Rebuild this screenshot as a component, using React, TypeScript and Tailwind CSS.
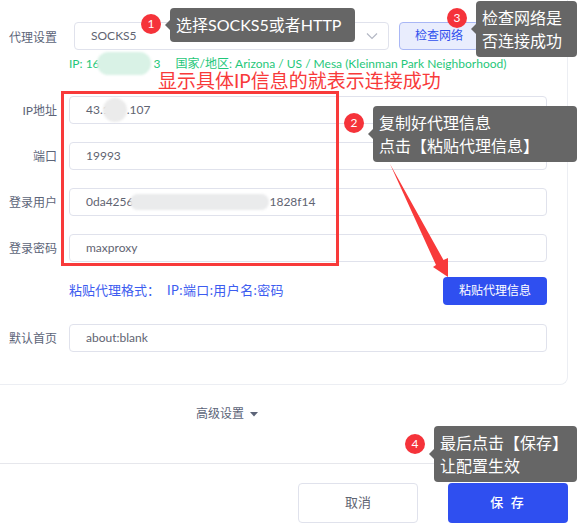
const font = { fontFamily: 'Lato, "Noto Sans CJK SC", sans-serif' };

function Row({ label, value, children }: { label: string; value?: string; children?: React.ReactNode }) {
  return (
    <div className="flex h-7 items-center">
      <div className="w-[57px] shrink-0 pt-0.5 text-right text-xs text-[#5c6478]">{label}</div>
      <div className="relative ml-3 flex h-7 flex-1 items-center rounded border border-[#e0e2ec] pl-4 text-xs text-[#5f6472]">
        {value}
        {children}
      </div>
    </div>
  );
}

function Blob({ className }: { className: string }) {
  return <div className={`absolute rounded-full blur-[1px] ${className}`} />;
}

function Callout({ n, className, dot, children }: { n: number; className: string; dot: string; children: React.ReactNode }) {
  return (
    <>
      <div className={`absolute flex h-5 w-5 items-center justify-center rounded-full bg-[#f5333a] text-xs text-white ${dot}`}>{n}</div>
      <div className={`absolute rounded bg-[#666666] px-1.5 py-[5px] text-base leading-[23px] whitespace-nowrap text-white ${className}`}>
        <div className="absolute top-1/2 -left-[5px] h-0 w-0 -translate-y-1/2 border-y-[5px] border-r-[5px] border-y-transparent border-r-[#666666]" />
        {children}
      </div>
    </>
  );
}

export default function App() {
  return (
    <div className="relative h-[531px] w-[577px] overflow-hidden bg-white" style={font}>
      {/* form panel */}
      <div className="h-[385px] w-[568px] rounded-br-lg border-r border-b border-[#eceef3] pt-[22px] pr-5">
        <div className="flex h-7 items-center">
          <div className="w-[57px] shrink-0 pt-[3px] text-right text-xs text-[#5c6478]">代理设置</div>
          <div className="ml-[17px] flex h-7 w-[315px] items-center justify-between rounded border border-[#e0e2ec] pr-2.5 pl-4 text-xs text-[#5f6472]">
            SOCKS5
            <svg width="12" height="12" viewBox="0 0 12 12" fill="none" stroke="#b4b8c4" strokeWidth="1.2">
              <path d="M1 3.5 L6 8.5 L11 3.5" />
            </svg>
          </div>
          <button className="ml-2.5 h-7 w-20 rounded border border-[#a9b7f5] bg-[#e9edfd] text-xs text-[#3050ee]">检查网络</button>
        </div>
        <div className="relative mt-[7px] ml-[69px] h-3.5 text-xs leading-[14px] whitespace-nowrap text-[#1fc77a]">
          <span>IP: 16</span>
          <span className="ml-[54px]">3</span>
          <span className="ml-[15px]">国家/地区: Arizona / US / Mesa (Kleinman Park Neighborhood)</span>
          <Blob className="top-[-5px] left-[28px] h-[23px] w-[54px] bg-[#d9f2e6]" />
        </div>
        <div className="mt-[25px] flex flex-col gap-[18px]">
          <Row label="IP地址" value="43.1">
            <span className="ml-[17px]">.107</span>
            <Blob className="top-[1px] left-[33px] h-6 w-6 bg-[#ebebeb]" />
          </Row>
          <Row label="端口" value="19993" />
          <Row label="登录用户" value="0da4256">
            <span className="ml-[136px]">1828f14</span>
            <Blob className="top-[5px] left-[60px] h-4 w-[139px] bg-[#eaebec]" />
          </Row>
          <Row label="登录密码" value="maxproxy" />
        </div>
        <div className="mt-[15px] flex h-7 items-center justify-between pl-[69px]">
          <span className="text-[13px] text-[#3c5cf0]">
            粘贴代理格式：<span className="ml-[7px] tracking-[0.4px]">IP:端口:用户名:密码</span>
          </span>
          <button className="h-7 w-[104px] rounded bg-[#2f4ff0] text-xs text-white">粘贴代理信息</button>
        </div>
        <div className="mt-[19px]">
          <Row label="默认首页" value="about:blank" />
        </div>
      </div>

      {/* advanced toggle */}
      <div className="mt-5 flex h-[18px] items-center pl-[196px] text-xs text-[#5c6478]">
        高级设置
        <svg className="ml-1.5" width="8" height="6" viewBox="0 0 8 6" fill="#5c6478">
          <path d="M0 1 H8 L4 5.5 Z" />
        </svg>
      </div>

      {/* footer */}
      <div className="mt-10 flex h-[68px] items-start justify-end gap-[30px] border-t border-[#e6e7ec] pt-[19px] pr-[9px]">
        <button className="h-10 w-[120px] rounded border border-[#e0e2ec] bg-white text-[13px] text-[#5f6472]">取消</button>
        <button className="h-10 w-[120px] rounded bg-[#2f4ff0] text-[13px] font-medium tracking-[2px] text-white">保 存</button>
      </div>

      {/* annotations drawn over the screenshot */}
      <div className="absolute top-[91px] left-[61px] h-[175px] w-[278px] border-[3px] border-[#f83a3a]" />
      <div className="absolute top-[69px] left-[158px] text-[19px] leading-6 whitespace-nowrap text-[#f83a3a]">显示具体IP信息的就表示连接成功</div>

      <svg className="absolute top-0 left-0" width="577" height="531">
        <polygon points="390,164 443.5,260 448,258 448,277 433,267 436,265" fill="#f83a3a" />
      </svg>

      <Callout n={1} dot="top-[14px] left-[141px]" className="top-2 left-[170px] h-[34px] w-[185px]">
        选择SOCKS5或者HTTP
      </Callout>
      <Callout n={2} dot="top-[113px] left-[344px]" className="top-[106px] left-[373px] h-[56px] w-[204px]">
        复制好代理信息
        <br />
        点击【粘贴代理信息】
      </Callout>
      <Callout n={3} dot="top-[8px] left-[447px]" className="top-px left-[476px] h-[56px] w-[101px]">
        检查网络是
        <br />
        否连接成功
      </Callout>
      <Callout n={4} dot="top-[434px] left-[405px]" className="top-[426px] left-[434px] h-[56px] w-[143px]">
        最后点击【保存】
        <br />
        让配置生效
      </Callout>
    </div>
  );
}
